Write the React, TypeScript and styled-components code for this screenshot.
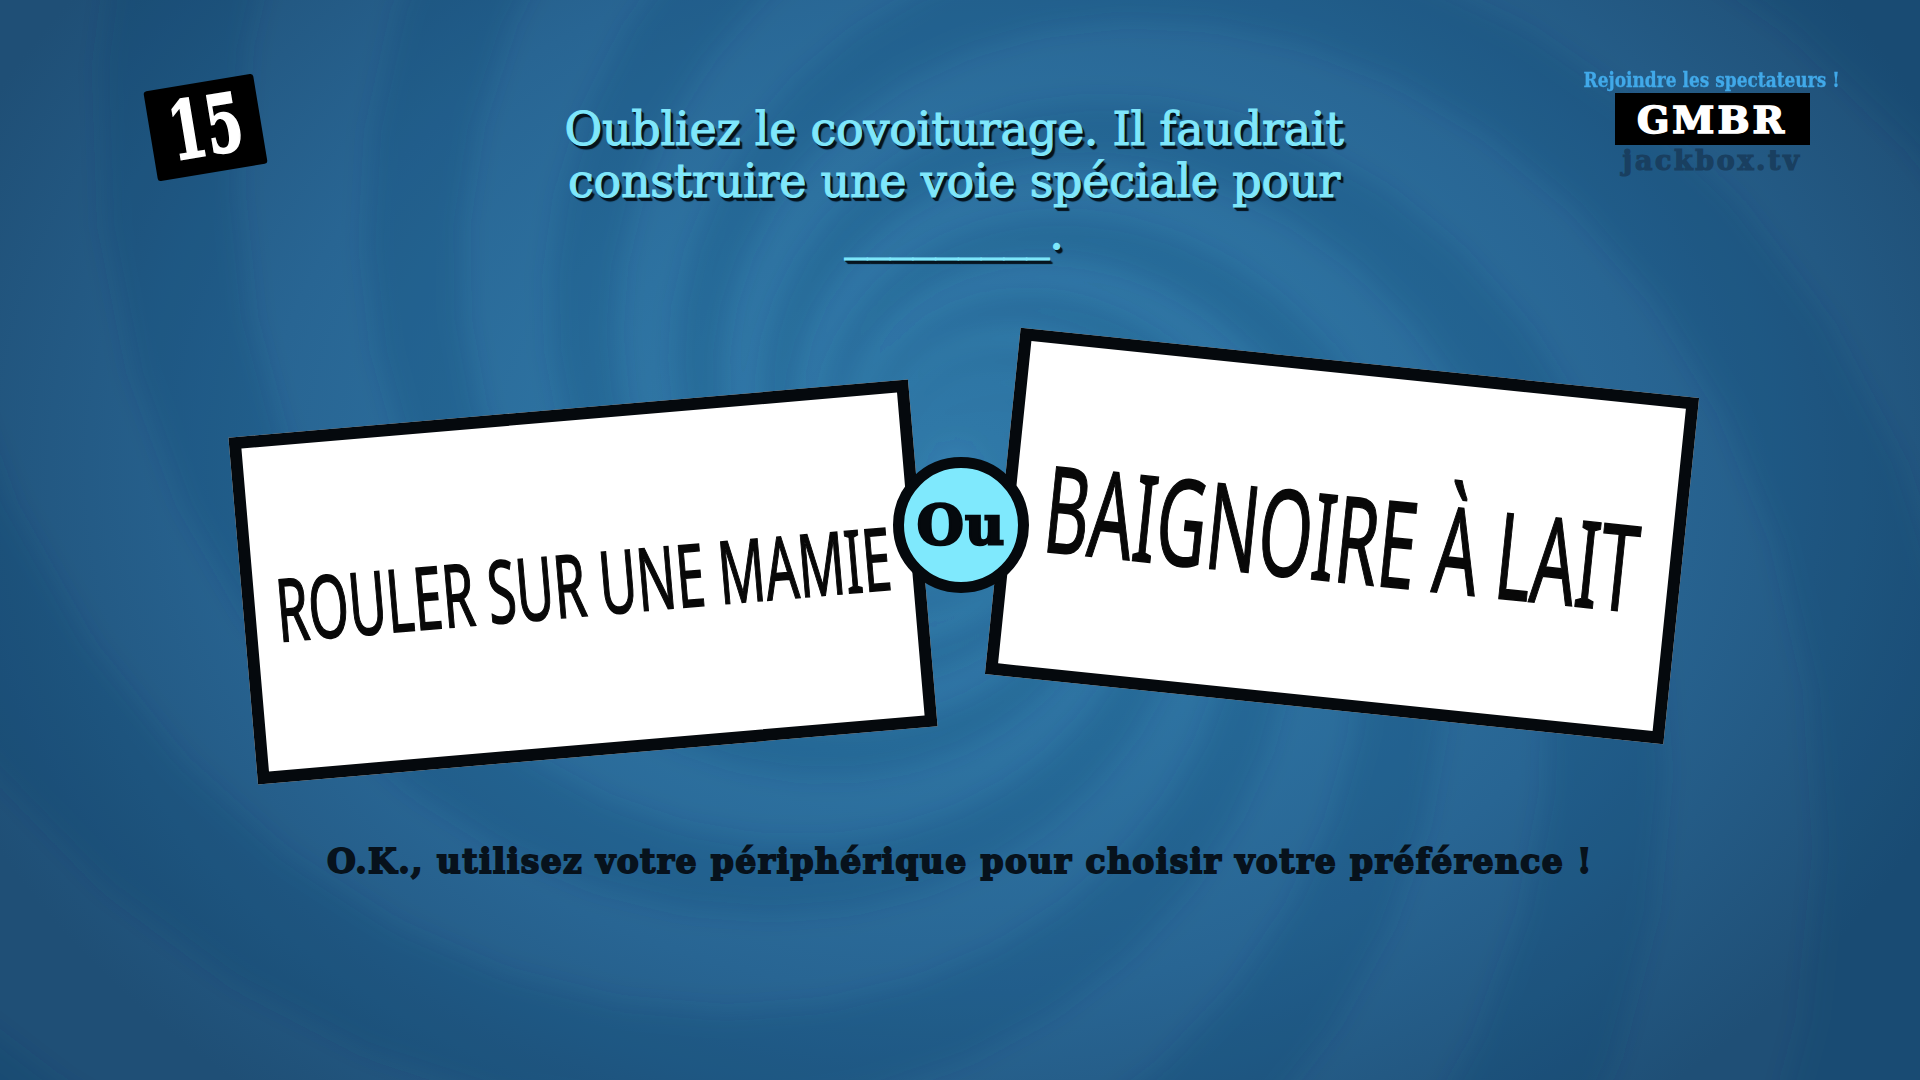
import React from 'react';
import styled, { createGlobalStyle } from 'styled-components';

const slab = '"DejaVu Serif", "Liberation Serif", serif';

const GlobalStyle = createGlobalStyle`
  html, body {
    margin: 0;
    padding: 0;
    background: #225a85;
  }
`;

const Stage = styled.div`
  display: grid;
  width: 1920px;
  height: 1080px;
  overflow: hidden;
  background: radial-gradient(ellipse 1080px 820px at 955px 470px, #347fae 0%, #2d72a1 36%, #286593 64%, #1f4f76 100%);
`;

const Swirl = styled.svg`
  grid-area: 1 / 1;
  width: 1920px;
  height: 1080px;
`;

const Content = styled.div`
  grid-area: 1 / 1;
  display: flex;
  flex-direction: column;
  min-width: 0;
`;

const Header = styled.header`
  display: flex;
  align-items: flex-start;
  height: 192px;
  padding: 68px 0 0 150px;
`;

const Timer = styled.div`
  display: flex;
  align-items: center;
  justify-content: center;
  flex: none;
  width: 111px;
  height: 91px;
  margin: 14px 293px 0 0;
  background: #000;
  border-radius: 3px;
  transform: rotate(-9.4deg);
  color: #fff;
  font: 700 80px/91px ${slab};
  -webkit-text-stroke: 2px #fff;
`;

const TimerDigits = styled.span`
  display: block;
  transform: scaleX(0.66);
`;

const Question = styled.h1`
  flex: none;
  width: 800px;
  margin: 35px 231px 0 0;
  color: #7fe7fb;
  font: 400 46px/52px ${slab};
  letter-spacing: -0.25px;
  text-align: center;
  text-shadow: 1px 2px 0 #06131d, 2px 3px 1px #06131d, 3px 4px 1px #06131d;
  -webkit-text-stroke: 1.1px #7fe7fb;
`;

const Room = styled.aside`
  display: flex;
  flex-direction: column;
  align-items: center;
  flex: none;
  width: 254px;
`;

const RoomHint = styled.div`
  height: 25px;
  color: #41a9e9;
  font: 700 20px/25px ${slab};
  white-space: nowrap;
  -webkit-text-stroke: 0.3px #41a9e9;
  transform: scaleX(0.85);
`;

const RoomCode = styled.div`
  width: 195px;
  height: 52px;
  background: #000;
  color: #fff;
  font: 900 38px/54px ${slab};
  letter-spacing: 3px;
  text-align: center;
  -webkit-text-stroke: 1.6px #fff;
`;

const RoomSite = styled.div`
  color: #193f60;
  font: 700 27px/32px ${slab};
  letter-spacing: 2.6px;
  -webkit-text-stroke: 1.2px #193f60;
`;

const CardRow = styled.section`
  display: flex;
  align-items: flex-start;
  margin-top: 102px;
  padding-left: 242px;
`;

const Card = styled.div<{ $tilt: number; $drop: number }>`
  display: flex;
  align-items: center;
  justify-content: center;
  flex: none;
  box-sizing: border-box;
  width: 682px;
  height: 348px;
  margin-top: ${(p) => p.$drop}px;
  background: #fff;
  border: 12px solid #05090d;
  transform: rotate(${(p) => p.$tilt}deg);
`;

const CardText = styled.span<{ $size: number; $squeeze: number }>`
  display: block;
  color: #080808;
  font: 400 ${(p) => p.$size}px/1 "Noto Sans", "Liberation Sans", sans-serif;
  white-space: nowrap;
  -webkit-text-stroke: 1.5px #080808;
  transform: scaleX(${(p) => p.$squeeze});
`;

const OrBadge = styled.div`
  position: relative;
  z-index: 2;
  display: flex;
  align-items: center;
  justify-content: center;
  flex: none;
  box-sizing: border-box;
  width: 136px;
  height: 136px;
  margin: 95px -28px 0 -31px;
  background: #7fe9fd;
  border: 11px solid #05090d;
  border-radius: 50%;
  color: #05090d;
  font: 900 54px/1 ${slab};
  letter-spacing: 1px;
  -webkit-text-stroke: 2.6px #05090d;
`;

const Instruction = styled.p`
  margin: 86px 0 0;
  padding-left: 327px;
  color: #07121c;
  font: 700 33px/40px ${slab};
  letter-spacing: 1.4px;
  white-space: nowrap;
  -webkit-text-stroke: 1.8px #07121c;
`;

// spiral arms round the middle of the screen, each one a band that twists outward
const armPath = (start: number, width: number) => {
  const cx = 955;
  const cy = 470;
  const twist = 2.4;
  const radii = Array.from({ length: 64 }, (_, i) => 30 * Math.pow(1.07, i));
  const point = (r: number, offset: number) => {
    const a = start + twist * Math.log(r / 30) + offset;
    return `${(cx + r * Math.cos(a)).toFixed(1)} ${(cy + r * Math.sin(a)).toFixed(1)}`;
  };
  const out = radii.map((r) => point(r, width / 2));
  const back = [...radii].reverse().map((r) => point(r, -width / 2));
  return `M${[...out, ...back].join('L')}Z`;
};

const arms = Array.from({ length: 7 }, (_, i) => (i * Math.PI * 2) / 7);

const App: React.FC = () => (
  <>
    <GlobalStyle />
    <Stage>
      <Swirl viewBox="0 0 1920 1080" aria-hidden="true">
        <defs>
          <filter id="soft" x="-10%" y="-10%" width="120%" height="120%">
            <feGaussianBlur stdDeviation="13" />
          </filter>
        </defs>
        <g filter="url(#soft)">
          {arms.map((start) => (
            <path key={start} d={armPath(start, 0.42)} fill="#0d3a63" opacity="0.18" />
          ))}
        </g>
      </Swirl>
      <Content>
        <Header>
          <Timer>
            <TimerDigits>15</TimerDigits>
          </Timer>
          <Question>
            Oubliez le covoiturage. Il faudrait
            <br />
            construire une voie spéciale pour
            <br />
            _________.
          </Question>
          <Room>
            <RoomHint>Rejoindre les spectateurs !</RoomHint>
            <RoomCode>GMBR</RoomCode>
            <RoomSite>jackbox.tv</RoomSite>
          </Room>
        </Header>
        <CardRow>
          <Card $tilt={-4.88} $drop={46}>
            <CardText $size={87} $squeeze={0.595}>ROULER SUR UNE MAMIE</CardText>
          </Card>
          <OrBadge>Ou</OrBadge>
          <Card $tilt={5.9} $drop={0}>
            <CardText $size={120} $squeeze={0.575}>BAIGNOIRE À LAIT</CardText>
          </Card>
        </CardRow>
        <Instruction>O.K., utilisez votre périphérique pour choisir votre préférence !</Instruction>
      </Content>
    </Stage>
  </>
);

export default App;
